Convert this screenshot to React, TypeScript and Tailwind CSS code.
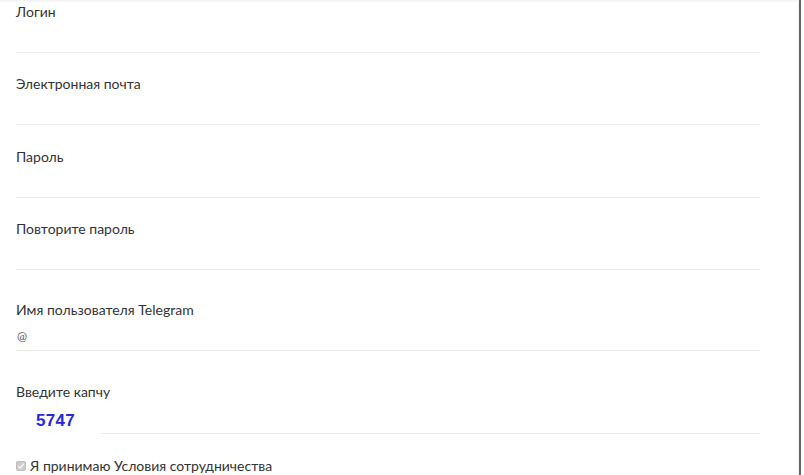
import React from "react";

function Field({ label, children, className = "" }: { label: string; children?: React.ReactNode; className?: string }) {
  return (
    <div className={className}>
      <div className="h-5 leading-5 text-[14px] text-[#333]">{label}</div>
      <div className="h-[31px] border-b border-[#ebebeb] flex items-center">{children}</div>
    </div>
  );
}

export default function App() {
  return (
    <div className="w-[804px] h-[475px] overflow-hidden bg-white flex" style={{ fontFamily: 'Lato, "Open Sans", sans-serif' }}>
      <div className="w-[799px] h-full border-r border-[#f0f0f0] shadow-[inset_0_3px_3px_-2px_rgba(0,0,0,0.08)] pt-[2px] pl-4 pr-[39px]">
        <div className="w-[744px]">
          <Field label="Логин" className="mb-[21px]" />
          <Field label="Электронная почта" className="mb-[22px]" />
          <Field label="Пароль" className="mb-[21px]" />
          <Field label="Повторите пароль" className="mb-[30px]" />
          <Field label="Имя пользователя Telegram" className="mb-[31px]">
            <span className="text-[12px] text-[#555] pl-[1px] pt-[2px]">@</span>
          </Field>
          <div className="mb-[22px]">
            <div className="h-5 leading-5 text-[14px] text-[#333]">Введите капчу</div>
            <div className="flex items-end h-[32px]">
              <div className="w-[84px] h-full flex items-start pt-[9px] pl-[20px]">
                <span
                  className="text-[17px] leading-5 font-bold text-[#2828e0] tracking-[0.3px]"
                  style={{ fontFamily: '"Liberation Sans", Arial, sans-serif' }}
                >
                  5747
                </span>
              </div>
              <div className="flex-1 h-full border-b border-[#ebebeb]" />
            </div>
          </div>
          <div className="flex items-center h-5">
            <div className="w-[10px] h-[10px] rounded-[2px] bg-[#cdcdcd] border border-[#bdbdbd] flex items-center justify-center mr-[4px]">
              <svg width="8" height="8" viewBox="0 0 8 8">
                <path d="M1.3 4.2 L3.2 6 L6.7 1.8" stroke="#f4f4f4" strokeWidth="1.4" fill="none" />
              </svg>
            </div>
            <span className="text-[14px] text-[#333] leading-5">Я принимаю Условия сотрудничества</span>
          </div>
        </div>
      </div>
      <div className="w-[2px] h-full bg-[#666]" />
      <div className="flex-1 h-full bg-white" />
    </div>
  );
}
